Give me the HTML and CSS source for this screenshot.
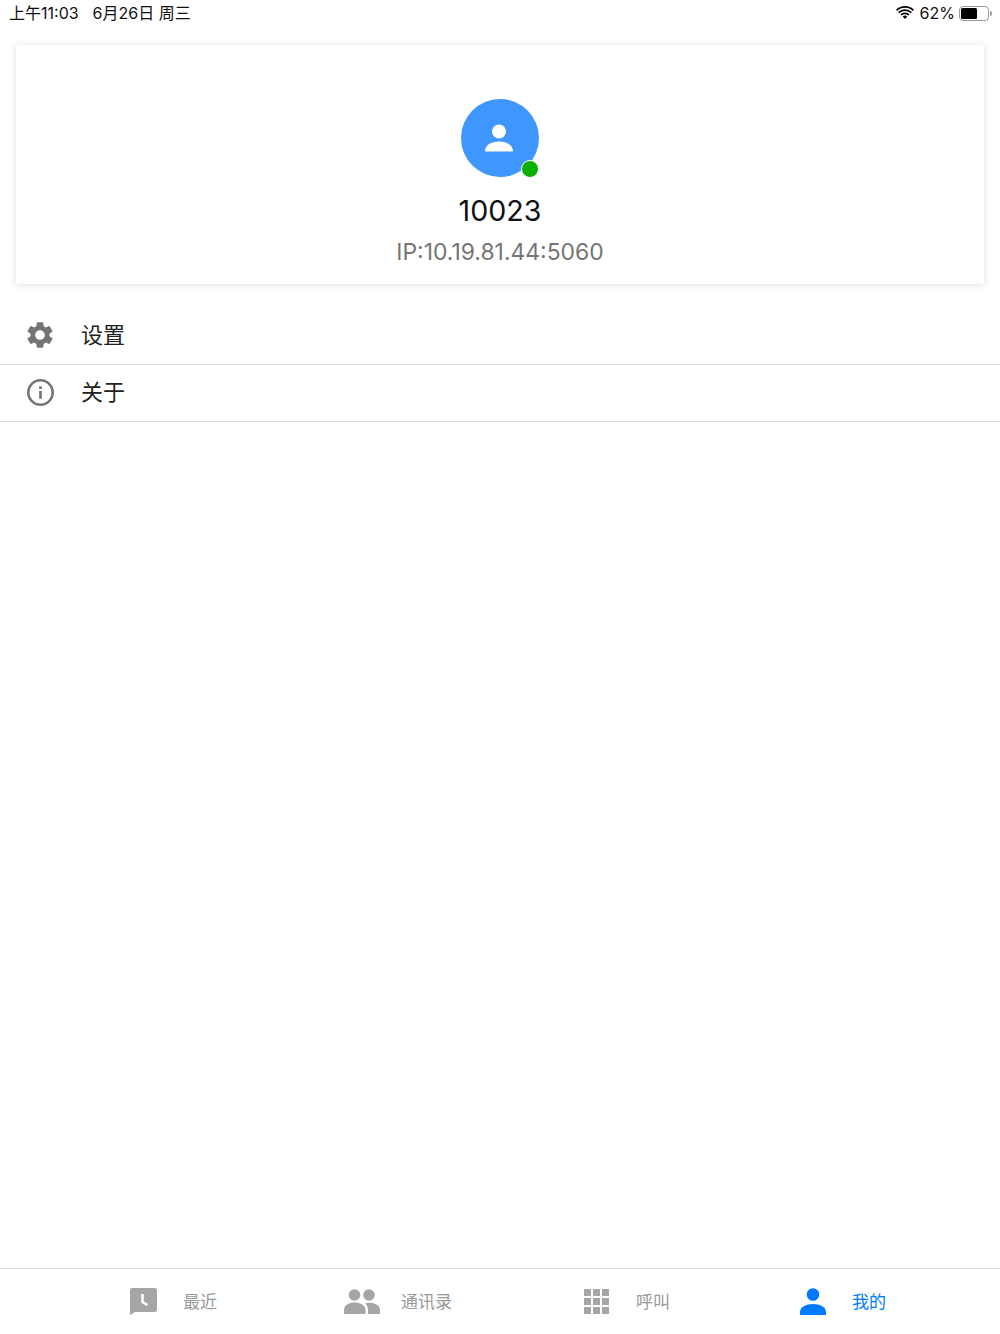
FILE: index.html
```html
<!DOCTYPE html>
<html lang="zh-CN">
<head>
    <meta charset="UTF-8">
    <meta name="viewport" content="width=device-width, initial-scale=1.0">
    <title>我的</title>
    <link rel="stylesheet" href="styles.css">
</head>
<body>
    <!-- Status Bar -->
    <div class="status-bar">
        <div class="status-time">上午11:03<span class="status-date">6月26日 周三</span></div>
        <div class="status-right">
            <svg class="wifi" viewBox="0 0 20 15" width="18" height="14">
                <path d="M10 14.2 7.4 11.5a3.7 3.7 0 0 1 5.2 0z" fill="#000"/>
                <path d="M4.9 9 6.3 10.4a5.3 5.3 0 0 1 7.4 0L15.1 9a7.2 7.2 0 0 0-10.200 0z" fill="#000"/>
                <path d="M2.300 6.400 3.700 7.800a8.900 8.900 0 0 1 12.600 0l1.400-1.400a10.900 10.900 0 0 0-15.400 0z" fill="#000"/>
                <path d="M0 4 1.300 5.300a12.300 12.300 0 0 1 17.400 0L20 4A14.100 14.100 0 0 0 0 4z" fill="#000"/>
            </svg>
            <span class="battery-text">62%</span>
            <div class="battery">
                <div class="battery-level"></div>
            </div>
            <div class="battery-tip"></div>
        </div>
    </div>

    <!-- Profile Card -->
    <div class="card">
        <div class="avatar">
            <svg viewBox="0 0 28 28" width="28" height="28">
                <circle cx="14" cy="7.500" r="7" fill="#fff"/>
                <path d="M0 27.500C0 21 6 17.500 14 17.500S28 21 28 27.500z" fill="#fff"/>
            </svg>
            <span class="online-dot"></span>
        </div>
        <div class="user-number">10023</div>
        <div class="user-ip">IP:10.19.81.44:5060</div>
    </div>

    <!-- Menu -->
    <div class="menu">
        <div class="menu-item">
            <span class="menu-icon">
                <svg viewBox="0 0 24 24" width="32" height="32">
                    <path fill="#757575" d="M19.14 12.94c.04-.3.06-.61.06-.94 0-.32-.02-.64-.07-.94l2.03-1.58c.18-.14.23-.41.12-.61l-1.92-3.32c-.12-.22-.37-.29-.59-.22l-2.39.96c-.5-.38-1.03-.7-1.62-.94l-.36-2.54c-.04-.24-.24-.41-.48-.41h-3.84c-.24 0-.43.17-.47.41l-.36 2.54c-.59.24-1.13.57-1.62.94l-2.39-.96c-.22-.08-.47 0-.59.22L2.74 8.87c-.12.21-.08.47.12.61l2.03 1.58c-.05.3-.09.63-.09.94s.02.64.07.94l-2.03 1.58c-.18.14-.23.41-.12.61l1.92 3.32c.12.22.37.29.59.22l2.39-.96c.5.38 1.03.7 1.62.94l.36 2.54c.05.24.24.41.48.41h3.84c.24 0 .44-.17.47-.41l.36-2.54c.59-.24 1.13-.56 1.62-.94l2.39.96c.22.08.47 0 .59-.22l1.92-3.32c.12-.22.07-.47-.12-.61l-2.01-1.58zM12 15.6c-1.98 0-3.6-1.62-3.6-3.6s1.62-3.6 3.6-3.6 3.6 1.620 3.6 3.600-1.62 3.6-3.6 3.6z"/>
                </svg>
            </span>
            <span class="menu-label">设置</span>
        </div>
        <div class="menu-item">
            <span class="menu-icon">
                <svg viewBox="0 0 26 26" width="27" height="27">
                    <circle cx="13" cy="13" r="11.750" fill="none" stroke="#757575" stroke-width="2.500"/>
                    <rect x="11.700" y="11.500" width="2.600" height="7.500" fill="#757575"/>
                    <rect x="11.700" y="7" width="2.600" height="2.600" fill="#757575"/>
                </svg>
            </span>
            <span class="menu-label">关于</span>
        </div>
    </div>

    <!-- Tab Bar -->
    <div class="tab-bar">
        <div class="tab">
            <span class="tab-icon">
                <svg viewBox="0 0 27 27" width="27" height="27">
                    <path fill="#a6a6a6" d="M2 0h23a2 2 0 0 1 2 2v20a2 2 0 0 1-2 2H5l-5 3V2a2 2 0 0 1 2-2z"/>
                    <path fill="none" stroke="#fff" stroke-width="2.600" d="M12.500 6v8l5 3"/>
                </svg>
            </span>
            <span class="tab-label">最近</span>
        </div>
        <div class="tab">
            <span class="tab-icon">
                <svg viewBox="0 0 36 25" width="36" height="25">
                    <circle cx="10.500" cy="6" r="5.800" fill="#a6a6a6"/>
                    <circle cx="25" cy="6" r="5.800" fill="#a6a6a6"/>
                    <path fill="#a6a6a6" d="M0 25v-4c0-5 5-7.500 10.500-7.500S21.500 16 21.500 21v4z"/>
                    <path fill="#a6a6a6" d="M24 25v-4.500c0-2.500-1.200-4.500-3-6 1.300-.4 2.700-.7 4-.7 5.500 0 11 2.500 11 7.200v4z"/>
                </svg>
            </span>
            <span class="tab-label">通讯录</span>
        </div>
        <div class="tab">
            <span class="tab-icon">
                <span class="dial-grid">
                    <i></i><i></i><i></i><i></i><i></i><i></i><i></i><i></i><i></i>
                </span>
            </span>
            <span class="tab-label">呼叫</span>
        </div>
        <div class="tab tab-active">
            <span class="tab-icon">
                <svg viewBox="0 0 26 27" width="26" height="27">
                    <circle cx="13" cy="6.500" r="6.300" fill="#007aff"/>
                    <path fill="#007aff" d="M0 27v-3c0-5 6-8 13-8s13 3 13 8v3z"/>
                </svg>
            </span>
            <span class="tab-label">我的</span>
        </div>
    </div>
</body>
</html>
```

FILE: styles.css
```css
/* General Styles */
* {
    box-sizing: border-box;
}

body {
    margin: 0;
    height: 100vh;
    display: flex;
    flex-direction: column;
    overflow: hidden;
    background: #fff;
    color: #000;
    font-family: Inter, "Noto Sans CJK SC", sans-serif;
}

/* Status Bar */
.status-bar {
    height: 45px;
    padding: 3px 8px 0 9px;
    display: flex;
    justify-content: space-between;
    align-items: flex-start;
    font-size: 16px;
    line-height: 20px;
    color: #111;
}

.status-date {
    margin-left: 14px;
}

.status-right {
    display: flex;
    align-items: center;
    height: 20px;
}

.wifi {
    margin-right: 6px;
}

.battery-text {
    margin-right: 4px;
}

.battery {
    width: 30px;
    height: 15px;
    border: 1px solid #999;
    border-radius: 4px;
    padding: 1px;
}

.battery-level {
    width: 62%;
    height: 100%;
    background: #000;
    border-radius: 1.5px;
}

.battery-tip {
    width: 2px;
    height: 5px;
    margin-left: 1px;
    background: #999;
    border-radius: 0 2px 2px 0;
}

/* Profile Card */
.card {
    height: 239px;
    margin: 0 16px;
    padding-top: 54px;
    display: flex;
    flex-direction: column;
    align-items: center;
    background: #fff;
    box-shadow: 0 1px 8px rgba(0, 0, 0, 0.12);
}

.avatar {
    position: relative;
    width: 78px;
    height: 78px;
    border-radius: 50%;
    background: #4096ff;
    display: flex;
    justify-content: center;
    align-items: center;
    padding: 0 2px 1px 0;
}

.online-dot {
    position: absolute;
    right: 0;
    bottom: -1px;
    width: 18px;
    height: 18px;
    border-radius: 50%;
    background: #0cb000;
    border: 1px solid #fff;
}

.user-number {
    margin-top: 16px;
    font-size: 28.600px;
    line-height: 36px;
    color: #111;
}

.user-ip {
    margin-top: 7px;
    font-size: 22.900px;
    line-height: 32px;
    color: #757575;
}

/* Menu */
.menu {
    margin-top: 23px;
    flex: 1;
}

.menu-item {
    height: 57.500px;
    display: flex;
    align-items: center;
    border-bottom: 1px solid #d9d9d9;
    padding-left: 24px;
}

.menu-icon {
    width: 32px;
    display: flex;
    justify-content: center;
    margin-right: 25px;
}

.menu-label {
    font-size: 22px;
    line-height: 26px;
    margin-bottom: 1px;
    color: #222;
}

/* Tab Bar */
.tab-bar {
    height: 66px;
    border-top: 1px solid #d9d9d9;
    padding-left: 125px;
    display: grid;
    grid-template-columns: 218px 235px 216px auto;
    align-items: center;
}

.tab {
    display: flex;
    align-items: center;
    color: #999;
}

.tab-icon {
    width: 37px;
    margin-right: 21px;
    display: flex;
    justify-content: center;
}

.tab-label {
    font-size: 17px;
    line-height: 22px;
}

.tab-active {
    color: #007aff;
}

.dial-grid {
    width: 25px;
    display: grid;
    grid-template-columns: repeat(3, 7px);
    gap: 2px;
}

.dial-grid i {
    height: 7px;
    background: #a6a6a6;
}
```
